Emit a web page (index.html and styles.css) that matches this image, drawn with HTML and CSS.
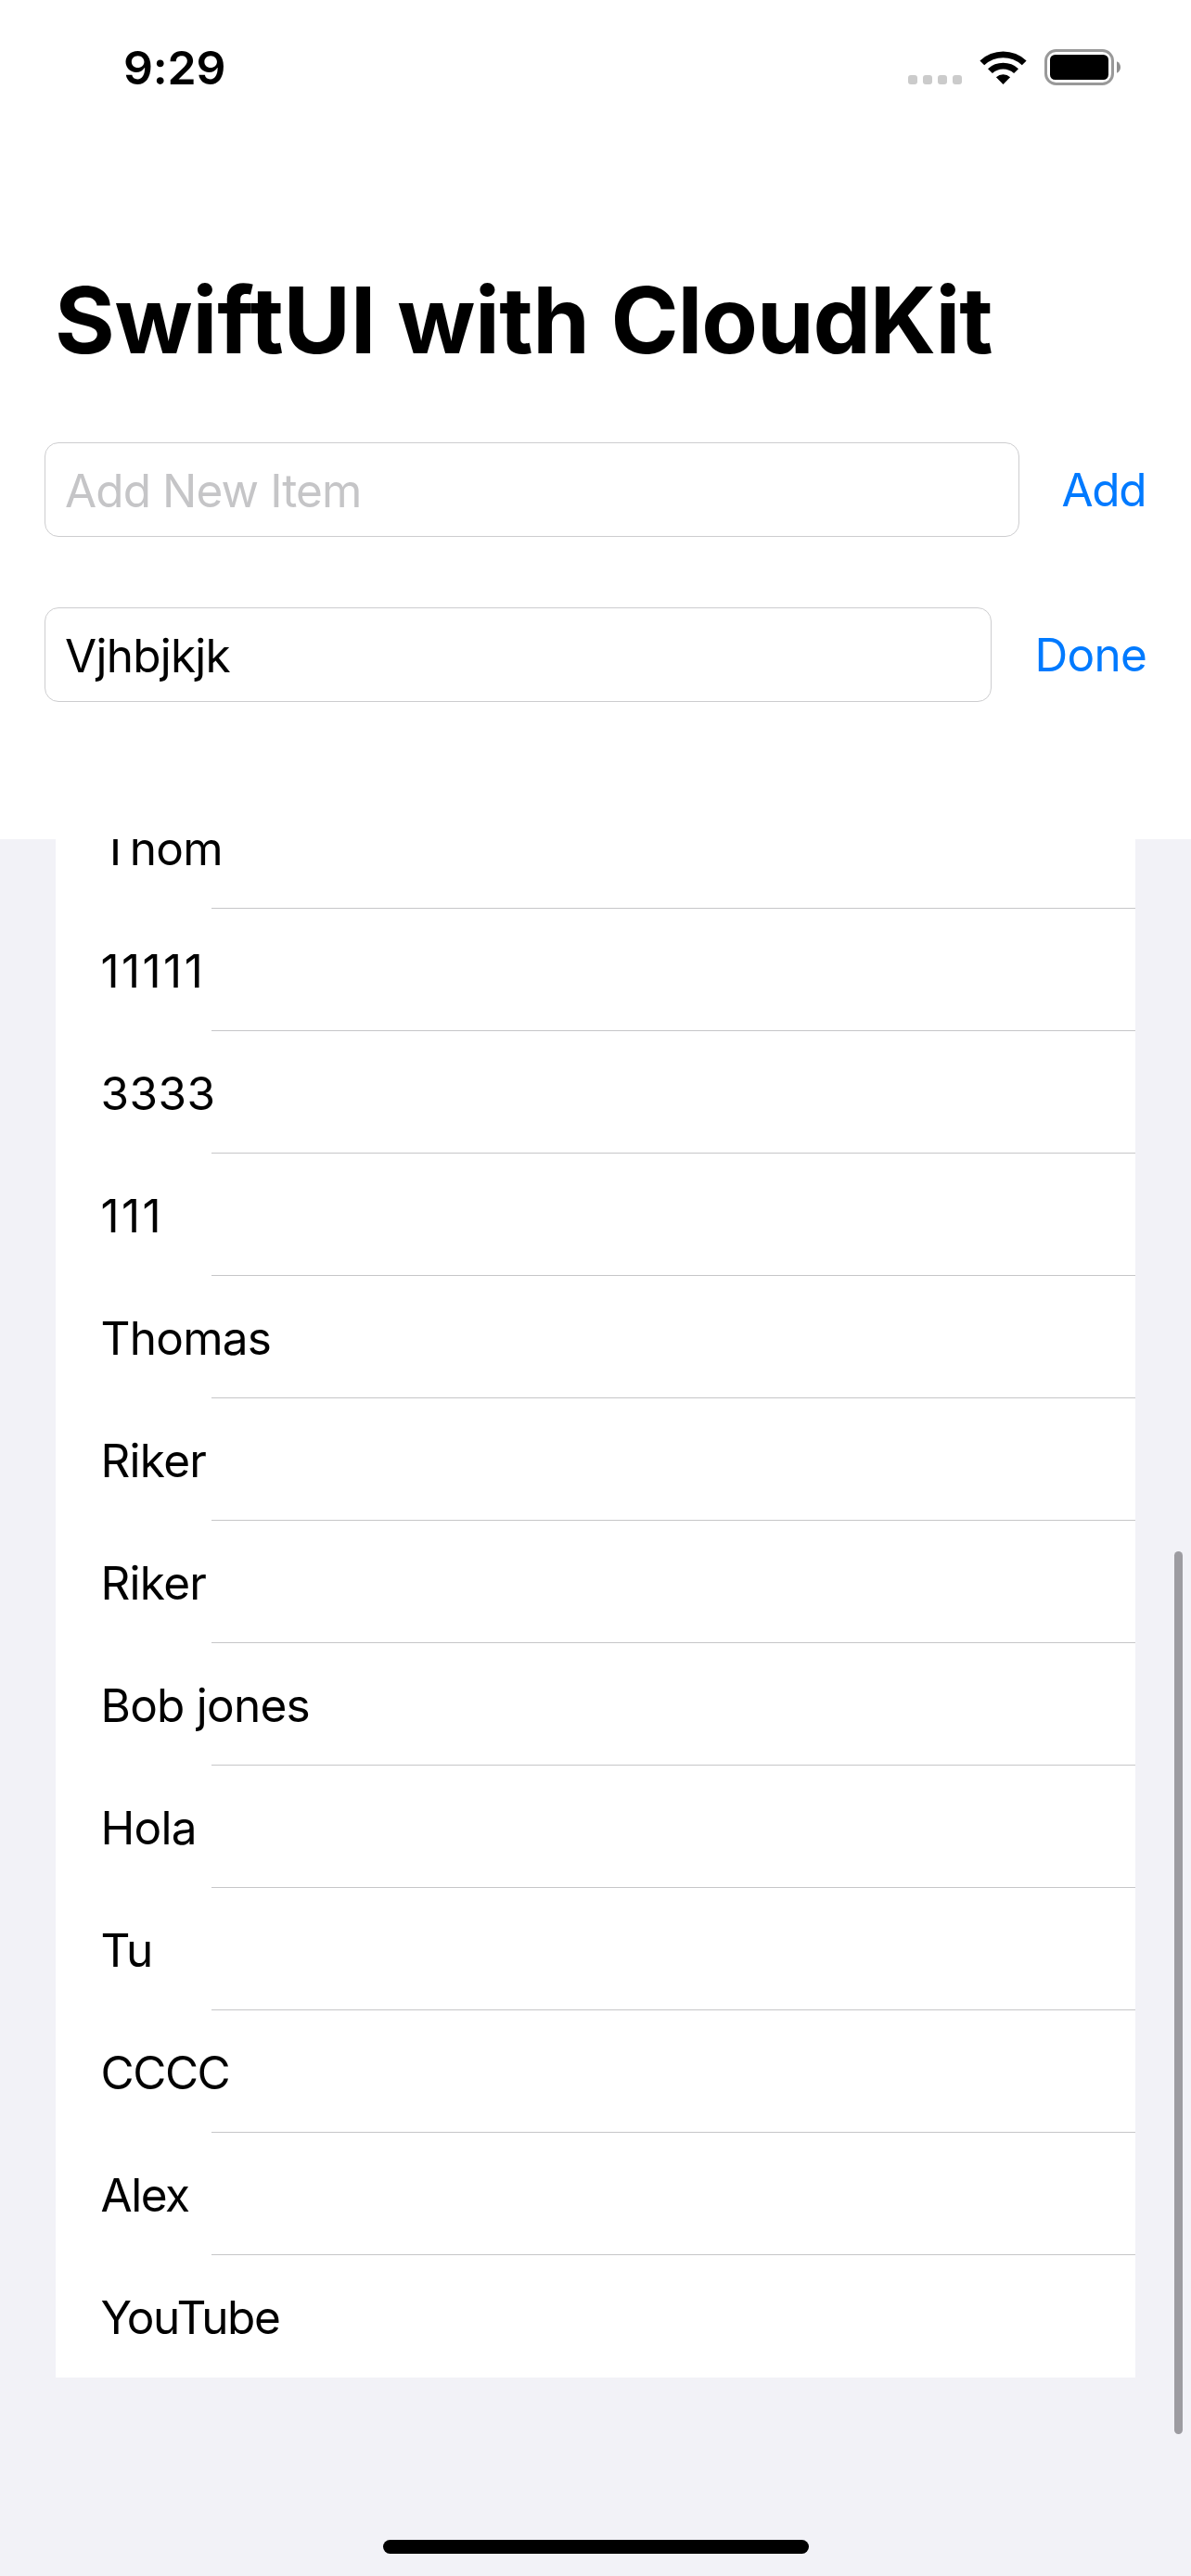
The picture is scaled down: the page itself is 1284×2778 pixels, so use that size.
FILE: index.html
```html
<!DOCTYPE html>
<html lang="en">
<head>
<meta charset="utf-8">
<title>SwiftUI with CloudKit</title>
<link rel="stylesheet" href="styles.css">
</head>
<body>
<div class="screen">
  <header class="status-bar">
    <time class="clock">9:29</time>
    <div class="indicators">
      <div class="signal"><i></i><i></i><i></i><i></i></div>
      <svg class="wifi" width="51" height="38" viewBox="0 0 51 38">
        <path d="M0.4 11.4A36.5 36.5 0 0 1 50.6 11.4L45.8 16.2A29.6 29.6 0 0 0 5.2 16.2Z"/>
        <path d="M9 20.2A24 24 0 0 1 42 20.2L37.1 25.1A17 17 0 0 0 13.9 25.1Z"/>
        <path d="M17.9 29.2A11.2 11.2 0 0 1 33.1 29.2L25.5 37Z"/>
      </svg>
      <svg class="battery" width="82" height="39" viewBox="0 0 82 39">
        <rect x="1.5" y="1.5" width="72" height="36" rx="11" fill="none" stroke="#999" stroke-width="3"/>
        <rect x="6" y="6" width="63" height="27" rx="5.5"/>
        <path d="M78 13.3C80.6 14.4 82 16.8 82 19.5S80.6 24.6 78 25.7Z" fill="#8f8f8f"/>
      </svg>
    </div>
  </header>

  <h1 class="title"><span class="lead">SwiftUI</span> with <span class="brand">CloudKit</span></h1>

  <form class="editor">
    <div class="field-row">
      <div class="field placeholder">Add New Item</div>
      <button type="button" class="action add tight">Add</button>
    </div>
    <div class="field-row">
      <div class="field">Vjhbjkjk</div>
      <button type="button" class="action">Done</button>
    </div>
  </form>

  <main class="list-view">
    <ul class="card">
      <li>Thom</li>
      <li class="ones">11111</li>
      <li class="digits">3333</li>
      <li class="ones">111</li>
      <li>Thomas</li>
      <li>Riker</li>
      <li>Riker</li>
      <li>Bob jones</li>
      <li>Hola</li>
      <li>Tu</li>
      <li class="tight">CCCC</li>
      <li class="tight">Alex</li>
      <li class="tight">YouTube</li>
    </ul>
    <div class="scrollbar"></div>
    <div class="home-indicator"></div>
  </main>
</div>
</body>
</html>
```
FILE: styles.css
```css
* { box-sizing: border-box; }

body {
  margin: 0;
  background: #fff;
  color: #000;
  font: 400 49.5px/60px Inter, "Liberation Sans", sans-serif;
  letter-spacing: -0.75px;
}

.screen {
  display: flex;
  flex-direction: column;
  width: 1284px;
  height: 2778px;
  overflow: hidden;
}

/* Status bar */
.status-bar {
  display: flex;
  justify-content: space-between;
  align-items: flex-start;
  height: 285px;
  padding: 53px 76px 0 133px;
}

.clock {
  margin-top: -10px;
  font-weight: 600;
  font-size: 50px;
  letter-spacing: -0.2px;
}

.indicators { display: flex; }

.signal {
  display: flex;
  gap: 6px;
  margin: 28px 19px 0 0;
}

.signal i {
  width: 10px;
  height: 10px;
  border-radius: 3px;
  background: #cbcbcb;
}

.wifi { margin: 1px 19px 0 0; }

/* Header */
.title {
  margin: 0 0 72px;
  padding-left: 59px;
  font-size: 99px;
  font-weight: 700;
  line-height: 120px;
  letter-spacing: -0.5px;
  white-space: nowrap;
}

.lead { letter-spacing: -0.2px; }
.brand { letter-spacing: -1.1px; }

.editor {
  display: flex;
  flex-direction: column;
  gap: 76px;
  height: 428px;
  padding: 0 48px;
}

.field-row {
  display: flex;
  align-items: center;
  gap: 46px;
  height: 102px;
}

.field {
  flex: 1;
  height: 102px;
  padding: 21px 21px 0;
  border: 1px solid #cdcdcf;
  border-radius: 15px;
}

.placeholder {
  color: #c5c5c7;
  letter-spacing: -0.9px;
}

.action {
  padding: 0;
  border: 0;
  background: none;
  color: #007aff;
  font: inherit;
  letter-spacing: inherit;
}

.action.add { padding-right: 1px; }

/* List */
.list-view {
  position: relative;
  flex: 1;
  overflow: hidden;
  background: #f2f2f7;
}

.card {
  margin: -57px 60px 0;
  padding: 0;
  background: #fff;
  list-style: none;
}

.card li {
  height: 132px;
  padding: 37px 0 0 48.5px;
  background: linear-gradient(#c6c6c8, #c6c6c8) 168px 100% / 100% 1px no-repeat;
}

.card li:last-child { background: none; }

.tight,
.action.tight { letter-spacing: -1.45px; }
.ones { letter-spacing: 2.4px; }
.digits { letter-spacing: 0.4px; }

.scrollbar {
  position: absolute;
  top: 768px;
  right: 9px;
  width: 9px;
  height: 952px;
  border-radius: 4.5px;
  background: #9d9ca1;
}

.home-indicator {
  position: absolute;
  left: 413px;
  bottom: 24px;
  width: 459px;
  height: 15px;
  border-radius: 7.5px;
  background: #000;
}
```
